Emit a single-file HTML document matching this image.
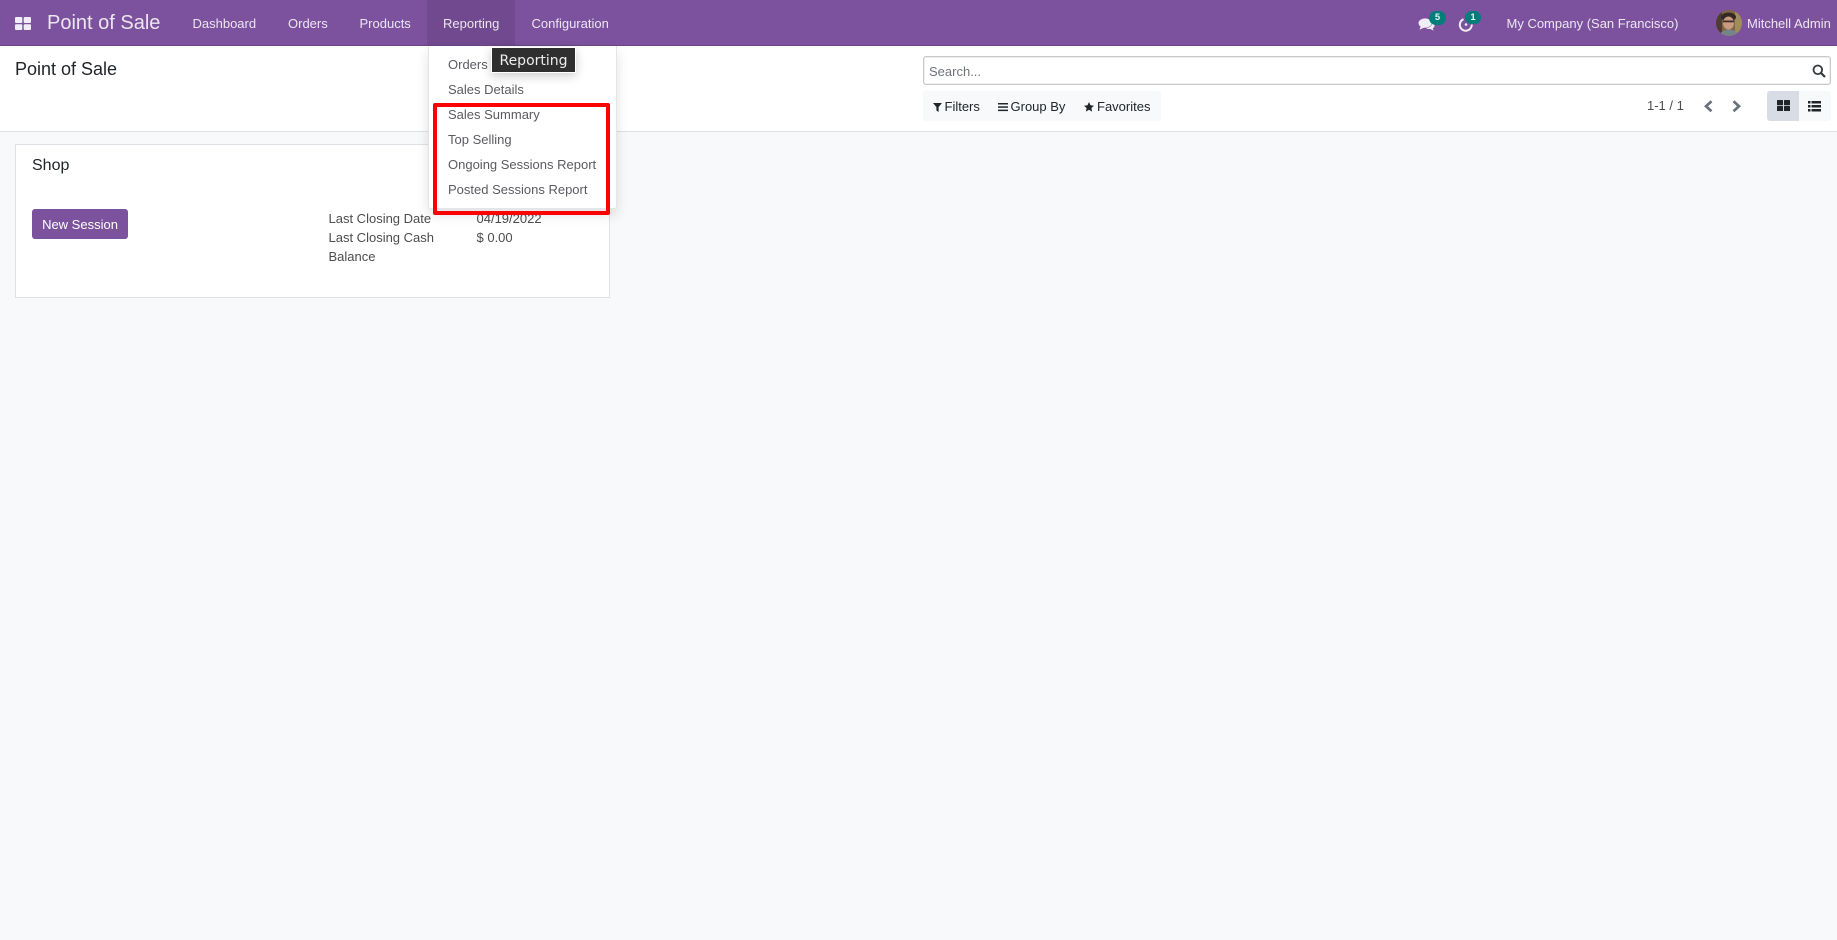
<!DOCTYPE html>
<html>
<head>
<meta charset="utf-8">
<title>Point of Sale</title>
<style>
html,body{margin:0;padding:0;width:1837px;height:940px;overflow:hidden;background:#f8f9fb;font-family:"Liberation Sans",sans-serif;font-size:13px;color:#4c4c4c}
.a{position:absolute;white-space:nowrap;line-height:16px}
svg{position:absolute;display:block}
.nav{color:#ece6f1}
.m{color:#5a5a62}
</style>
</head>
<body>
<div class="a" style="left:0;top:0;width:1837px;height:45px;background:#7c529e;border-bottom:1px solid #6a4688"></div>
<div class="a" style="left:427px;top:0;width:88px;height:45px;background:#70498f"></div>

<svg style="left:15px;top:17px" width="16" height="13" viewBox="0 0 16 13"><g fill="#f1ecf5"><rect x="0" y="0" width="7.3" height="6" rx="1"/><rect x="8.7" y="0" width="7.3" height="6" rx="1"/><rect x="0" y="7.2" width="7.3" height="5.8" rx="1"/><rect x="8.7" y="7.2" width="7.3" height="5.8" rx="1"/></g></svg>
<div class="a nav" style="left:47px;top:12px;font-size:20px;line-height:23px">Point of Sale</div>
<div class="a nav" style="left:192.5px;top:16px">Dashboard</div>
<div class="a nav" style="left:288px;top:16px">Orders</div>
<div class="a nav" style="left:359.5px;top:16px">Products</div>
<div class="a nav" style="left:443px;top:16px">Reporting</div>
<div class="a nav" style="left:531.5px;top:16px">Configuration</div>

<!-- systray -->
<svg style="left:1418px;top:17px" width="17" height="15" viewBox="0 0 18 16"><g fill="#f1ecf5"><ellipse cx="7.5" cy="6.5" rx="7" ry="5"/><path d="M3 9.5 L1.5 13.5 L7 11Z"/><path d="M15 5.5c1.8.9 2.6 2.2 2.6 3.6 0 1.3-.8 2.4-2 3.1l1 2.5-3.4-1.900c-1.7.2-3.3-.1-4.500-1 3.600-.1 6.800-2.600 6.300-6.300z"/></g></svg>
<div class="a" style="left:1429px;top:11px;width:17px;height:14px;border-radius:8px;background:#017e7c;color:#e8f3f3;font-size:9.5px;font-weight:bold;line-height:14px;text-align:center">5</div>
<svg style="left:1458px;top:16px" width="16" height="16" viewBox="0 0 16 16"><path d="M5.500 3.200 A6 6 0 1 0 13.800 8.500" fill="none" stroke="#f1ecf5" stroke-width="2"/><circle cx="8" cy="8.500" r="1.300" fill="#f1ecf5"/></svg>
<div class="a" style="left:1465px;top:11px;width:16px;height:13px;border-radius:8px;background:#017e7c;color:#e8f3f3;font-size:9.5px;font-weight:bold;line-height:13px;text-align:center">1</div>
<div class="a nav" style="left:1506.5px;top:16px">My Company (San Francisco)</div>
<svg style="left:1716px;top:10px" width="26" height="26" viewBox="0 0 26 26">
<defs><clipPath id="c"><circle cx="13" cy="13" r="13"/></clipPath></defs>
<g clip-path="url(#c)">
<rect width="26" height="26" fill="#7d6545"/>
<rect x="19" width="7" height="26" fill="#a08d5c"/>
<rect x="0" width="6" height="26" fill="#4f3c30"/>
<ellipse cx="12.500" cy="7" rx="7.500" ry="4.500" fill="#332824"/>
<ellipse cx="12.500" cy="13" rx="5.500" ry="6.500" fill="#c99a80"/>
<rect x="7" y="10.500" width="11" height="1.800" fill="#3d2e2c"/>
<ellipse cx="13" cy="27" rx="10" ry="7.500" fill="#76848a"/>
</g></svg>
<div class="a nav" style="left:1747px;top:16px">Mitchell Admin</div>

<!-- control panel -->
<div class="a" style="left:0;top:46px;width:1837px;height:85px;background:#fff;border-bottom:1px solid #dee2e6"></div>
<div class="a" style="left:15px;top:59px;font-size:18px;line-height:21px;color:#212529">Point of Sale</div>

<div class="a" style="left:923px;top:56px;width:906px;height:27px;background:#fff;border:1px solid #c9c9c9;border-radius:3px;box-shadow:inset 0 0 0 .4px #d4d4d4"></div>
<div class="a" style="left:929px;top:64px;color:#6f7479">Search...</div>
<svg style="left:1812px;top:64px" width="14" height="14" viewBox="0 0 14 14"><circle cx="5.8" cy="5.8" r="4.300" fill="none" stroke="#33393f" stroke-width="1.800"/><path d="M9 9 L13 13" stroke="#33393f" stroke-width="2.200"/></svg>

<div class="a" style="left:923px;top:91px;width:238px;height:30px;background:#f8f9fa;border-radius:3px"></div>
<svg style="left:933px;top:102.500px" width="9" height="9" viewBox="0 0 9 9"><path d="M0 0H9L5.600 4V9L3.400 7.500V4Z" fill="#212529"/></svg>
<div class="a" style="left:944.5px;top:99px;color:#212529">Filters</div>
<svg style="left:998px;top:103px" width="10" height="9" viewBox="0 0 10 9"><g fill="#212529"><rect width="10" height="1.500"/><rect y="3.300" width="10" height="1.500"/><rect y="6.600" width="10" height="1.500"/></g></svg>
<div class="a" style="left:1010.5px;top:99px;color:#212529">Group By</div>
<svg style="left:1084px;top:102px" width="10" height="10" viewBox="0 0 10 10"><path d="M5 0L6.500 3.300L10 3.700L7.400 6L8.100 9.600L5 7.800L1.900 9.600L2.600 6L0 3.700L3.500 3.300Z" fill="#212529"/></svg>
<div class="a" style="left:1097px;top:99px;color:#212529">Favorites</div>

<div class="a" style="left:1647px;top:98px;color:#4c4c4c">1-1 / 1</div>
<svg style="left:1704px;top:100px" width="9" height="12" viewBox="0 0 9 12"><path d="M7.500 1.200L2 6.200L7.500 11.200" fill="none" stroke="#69717d" stroke-width="2.700"/></svg>
<svg style="left:1732px;top:100px" width="9" height="12" viewBox="0 0 9 12"><path d="M1.500 1.200L7 6.200L1.500 11.200" fill="none" stroke="#69717d" stroke-width="2.700"/></svg>

<div class="a" style="left:1767px;top:91px;width:32px;height:30px;background:#d8dde5;border-radius:3px 0 0 3px"></div>
<div class="a" style="left:1799px;top:91px;width:32px;height:30px;background:#f8f9fa;border-radius:0 3px 3px 0"></div>
<svg style="left:1777px;top:100px" width="13" height="11" viewBox="0 0 13 11"><g fill="#212529"><rect width="6" height="5.200" rx=".6"/><rect x="7" width="6" height="5.200" rx=".6"/><rect y="6" width="6" height="5.200" rx=".6"/><rect x="7" y="6" width="6" height="5.200" rx=".6"/></g></svg>
<svg style="left:1808px;top:100.500px" width="13" height="11" viewBox="0 0 13 11"><g fill="#212529"><rect width="2.500" height="2.500"/><rect x="3.500" width="9.500" height="2.500"/><rect y="4" width="2.500" height="2.500"/><rect x="3.500" y="4" width="9.500" height="2.500"/><rect y="8" width="2.500" height="2.500"/><rect x="3.500" y="8" width="9.500" height="2.500"/></g></svg>

<!-- card -->
<div class="a" style="left:15px;top:144px;width:593px;height:152px;background:#fff;border:1px solid #dee2e6"></div>
<div class="a" style="left:32px;top:156px;font-size:16px;line-height:19px;color:#212529">Shop</div>
<div class="a" style="left:32px;top:209px;width:96px;height:30px;background:#7c529e;border-radius:3px;color:#fff;line-height:31px;text-align:center">New Session</div>
<div class="a" style="left:328.5px;top:211px">Last Closing Date</div>
<div class="a" style="left:476.5px;top:211px">04/19/2022</div>
<div class="a" style="left:328.5px;top:230px">Last Closing Cash</div>
<div class="a" style="left:476.5px;top:230px">$ 0.00</div>
<div class="a" style="left:328.5px;top:249px">Balance</div>

<!-- dropdown -->
<div class="a" style="left:428px;top:46px;width:187px;height:162px;background:#fff;border:1px solid #e3e5e8;border-top:0;box-sizing:content-box;border-radius:0 0 3px 3px;box-shadow:0 6px 12px rgba(0,0,0,.12)"></div>
<div class="a m" style="left:448px;top:57px">Orders</div>
<div class="a m" style="left:448px;top:82px">Sales Details</div>
<div class="a m" style="left:448px;top:107px">Sales Summary</div>
<div class="a m" style="left:448px;top:132px">Top Selling</div>
<div class="a m" style="left:448px;top:157px">Ongoing Sessions Report</div>
<div class="a m" style="left:448px;top:182px">Posted Sessions Report</div>

<div class="a" style="left:433px;top:103px;width:169px;height:104px;border:4px solid #f00;border-radius:2px"></div>

<!-- tooltip -->
<div class="a" style="left:491px;top:47px;width:83px;height:24px;background:#2f2f2f;border:1px solid #fff;color:#eeeeee;font-family:'DejaVu Sans',sans-serif;font-size:14px;line-height:26px;text-align:center;box-shadow:0 3px 10px rgba(0,0,0,.2)">Reporting</div>
</body>
</html>
